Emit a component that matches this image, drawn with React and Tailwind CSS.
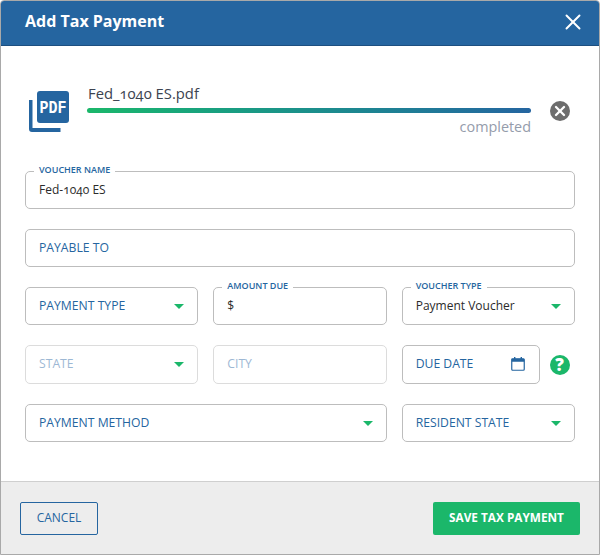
import React from 'react';
import { X } from 'lucide-react';

const Caret = () => (
  <span className="w-0 h-0 border-x-[5px] border-x-transparent border-t-[5px] border-t-[#1bb76a]" />
);

function Field({ label, floating, value, caret, disabled, children, className = '' }) {
  const border = disabled ? 'border-[#dcdcdc]' : 'border-[#bdbdbd]';
  return (
    <div className={`relative flex items-center justify-between pl-[13px] pr-[13px] border ${border} rounded-[5px] bg-white ${className}`}>
      {floating && (
        <span className="absolute left-[8px] -top-[8px] px-[5px] bg-white text-[9px] leading-[12px] font-semibold text-[#2565a0]">
          {floating}
        </span>
      )}
      {label && (
        <span className={`text-[12.2px] font-medium ${disabled ? 'text-[#9db8d4]' : 'text-[#2565a0]'}`}>
          {label}
        </span>
      )}
      {value && <span className="text-[12px] font-medium text-[#2b2b2b] oldstyle-nums">{value}</span>}
      {caret && <Caret />}
      {children}
    </div>
  );
}

export default function App() {
  return (
    <div className="w-[600px] h-[555px] flex flex-col bg-white border border-[#a9a9a9] rounded-t-[4px] overflow-hidden font-['Open_Sans',sans-serif]">
      <div className="h-[45px] shrink-0 flex items-center justify-between pb-[2px] pl-[24px] pr-[13px] bg-[#2565a0] border-b border-[#1d4f80]">
        <h1 className="-mt-[2px] text-[16px] font-bold text-white">Add Tax Payment</h1>
        <X className="w-[26px] h-[26px] text-white" strokeWidth={1.8} />
      </div>

      <div className="flex-1 px-[24px]">
        {/* uploaded file */}
        <div className="flex items-start mt-[45px] h-[80px]">
          <svg width="41" height="41" viewBox="0 0 41 41" className="ml-[4px] shrink-0">
            <path d="M0 9h3.5v28h28V41H3a3 3 0 0 1-3-3z" fill="#2565a0" />
            <rect x="8" y="0" width="32" height="32" rx="3" fill="#2565a0" />
            <text transform="translate(24 22) scale(1 1.25)" textAnchor="middle" fontSize="15" fontWeight="700" fill="#fff" fontFamily="'Liberation Mono', monospace">PDF</text>
          </svg>
          <div className="ml-[17px] w-[444px] shrink-0">
            <div className="pl-[1px] text-[14.8px] leading-[18px] -mt-[7px] text-[#3c4350] oldstyle-nums">Fed_1040 ES.pdf</div>
            <div className="h-[5px] mt-[6px] rounded-full bg-gradient-to-r from-[#1bb76a] to-[#2565a0]" />
            <div className="mt-[5px] text-right text-[14.4px] leading-[18px] text-[#959cab]">completed</div>
          </div>
          <span className="ml-[19px] mt-[10px] w-[20px] h-[20px] shrink-0 flex items-center justify-center rounded-full bg-[#6d6d6d]">
            <X className="w-[16px] h-[16px] text-white" strokeWidth={3.5} />
          </span>
        </div>

        <div className="flex flex-col gap-[20px]">
          <Field floating="VOUCHER NAME" value="Fed-1040 ES" className="h-[38px]" />
          <Field label="PAYABLE TO" className="h-[38px]" />
          <div className="grid grid-cols-3 gap-[15px] h-[38px]">
            <Field label="PAYMENT TYPE" caret />
            <Field floating="AMOUNT DUE" value="$" />
            <Field floating="VOUCHER TYPE" value="Payment Voucher" caret />
          </div>
          <div className="grid grid-cols-3 gap-[15px] h-[39px]">
            <Field label="STATE" caret disabled className="pb-[1px]" />
            <Field label="CITY" disabled className="pb-[1px]" />
            <div className="flex items-center">
              <Field label="DUE DATE" className="w-[138px] h-[39px] pb-[1px] shrink-0">
                <svg width="14" height="14" viewBox="0 0 14 14" className="mr-[1px]">
                  <rect x="0.75" y="1.75" width="12.5" height="11.5" rx="1" fill="none" stroke="#2565a0" strokeWidth="1.2" />
                  <rect x="0.75" y="1.75" width="12.5" height="3" fill="#2565a0" />
                  <rect x="3" y="0" width="1.4" height="2" fill="#2565a0" />
                  <rect x="9.6" y="0" width="1.4" height="2" fill="#2565a0" />
                </svg>
              </Field>
              <span className="ml-[10px] w-[20px] h-[20px] flex items-center justify-center rounded-full bg-[#1bb76a] text-white text-[17px] font-extrabold leading-none">?</span>
            </div>
          </div>
          <div className="grid grid-cols-3 gap-[15px] h-[38px]">
            <Field label="PAYMENT METHOD" caret className="col-span-2" />
            <Field label="RESIDENT STATE" caret />
          </div>
        </div>
      </div>

      <div className="h-[73px] shrink-0 flex items-center justify-between px-[19px] bg-[#ededed] border-t border-[#cfcfcf]">
        <button className="w-[78px] h-[33px] border border-[#2565a0] rounded-[2px] text-[12px] font-medium text-[#2565a0]">CANCEL</button>
        <button className="w-[147px] h-[33px] bg-[#1bb76a] rounded-[2px] text-[11.8px] font-bold text-white">SAVE TAX PAYMENT</button>
      </div>
    </div>
  );
}
